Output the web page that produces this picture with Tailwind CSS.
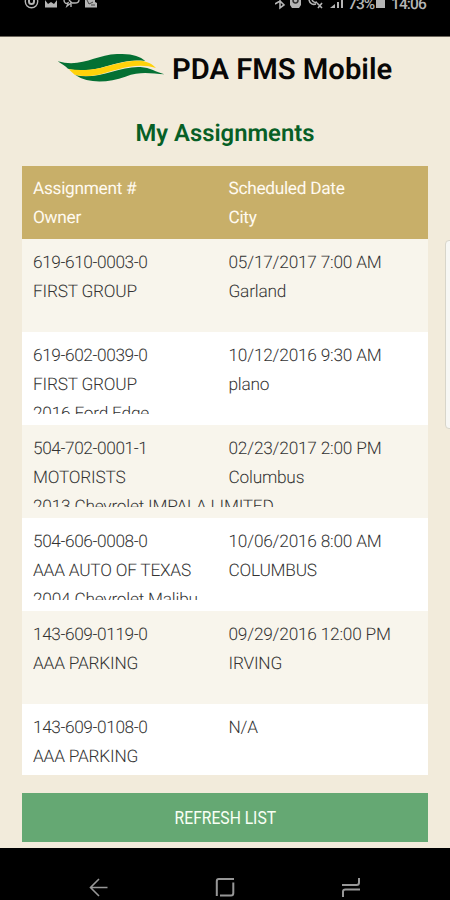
<!DOCTYPE html>
<html lang="en">
<head>
<meta charset="utf-8">
<title>PDA FMS Mobile</title>
<script src="https://cdn.jsdelivr.net/npm/@tailwindcss/browser@4"></script>
</head>
<body class="w-[450px] h-[900px] overflow-hidden bg-[#f2ebdb] font-[Roboto,sans-serif] [text-rendering:geometricPrecision]">
<div class="relative flex h-[900px] w-[450px] flex-col overflow-hidden">
  <header class="flex h-[37px] shrink-0 items-start justify-between overflow-hidden border-b border-[#6b655b] bg-black pl-[24px] pr-[25px] text-[#b5b5b5]">
    <svg class="h-[10px] w-[76px]" viewBox="0 0 76 10" fill="none" stroke="currentColor" stroke-width="1.4">
      <circle cx="7.500" cy="1.500" r="6.200"/><path d="M5 0v1.500a2.500 2.500 0 0 0 5 0V0" stroke-width="2"/>
      <path d="M21 0v7.500h12V0l-3 4-3-2-3 2z" fill="currentColor" stroke="none"/>
      <path d="M40 0c0 3 2 4 4 3l-1 3 4-3h4c3 0 4-1 4-3M45 0l3 3M47 4v3"/>
      <path d="M61 0h10v2l2 1v4.500H61z" fill="currentColor" stroke="none"/><path d="M63 0l2 4 4-2M67 5h4" stroke="#444" stroke-width="1"/>
    </svg>
    <div class="flex items-start">
      <svg class="h-[10px] w-[73px]" viewBox="0 0 73 10" fill="none" stroke="currentColor" stroke-width="1.600">
        <path d="M0 4l5-3 4 4-4 3V0"/>
        <path d="M15 0h11v5l-2 3h-7l-2-3z" fill="currentColor" stroke="none"/><path d="M18 0c0 4 5 4 5 0" stroke="#333"/>
        <path d="M34 0c1 4 4 5 7 4M37 0c1 2 3 3 5 2M42 3l5 5M47 3l-4 5"/>
        <path d="M55 8l5-4v4zM62 8V2h2v6zM66 8V0h2v8z" fill="currentColor" stroke="none"/>
      </svg>
      <span class="-mt-[5px] w-[28px] whitespace-nowrap text-[15.5px] font-medium leading-[18px] tracking-[-0.9px]">73%</span>
      <span class="mr-[6px] block h-[8px] w-[9px] bg-[#b5b5b5]"></span>
      <span class="-mt-[5px] w-[34px] whitespace-nowrap text-[15.5px] font-medium leading-[18px] tracking-[-0.9px]">14:06</span>
    </div>
  </header>

  <main class="flex h-[811px] shrink-0 flex-col px-[22px]">
    <div class="flex h-[65px] items-center pl-[35px] pt-px">
      <svg class="h-[32px] w-[108px] shrink-0" viewBox="15 16 324 96">
        <path d="M17 38C90 58 130 18 195 16C240 15 262 22 280 37C225 31 195 45 145 58C105 67 75 66 48 60C40 53 30 46 17 38Z" fill="#047033"/>
        <path d="M70 79C135 96 200 52 265 55C295 57 312 70 337 77C300 76 270 66 220 84C170 102 110 106 70 79Z" fill="#047033"/>
        <path d="M50 62C150 74 185 34 265 36C288 38 302 47 312 58C250 38 190 66 140 78C110 84 88 82 68 78Z" fill="#ffd20a"/>
      </svg>
      <h1 class="ml-[7px] whitespace-nowrap text-[29.2px] font-semibold leading-[34px] text-[#090807]">PDA FMS Mobile</h1>
    </div>
    <h2 class="h-[64px] pt-[15px] text-center text-[23.8px] font-semibold leading-[32px] text-[#075f26]">My Assignments</h2>

    <section class="h-[609px] w-[406px] shrink-0 overflow-hidden text-[17.3px] font-light leading-[29px] tracking-[-0.22px] text-[#333]">
      <div class="grid h-[73px] grid-cols-[195.5px_1fr] content-start bg-[#c8af69] px-[11px] pt-[9px] font-normal tracking-[-0.3px] text-[#fffaf0]">
        <span>Assignment #</span><span>Scheduled Date</span><span>Owner</span><span>City</span>
      </div>
      <div class="h-[93px] bg-[#f8f5ec] px-[11px] pt-[9.8px]">
        <div class="grid h-[72px] grid-cols-[195.5px_1fr] content-start overflow-hidden">
          <span class="tracking-[-0.42px]">619-610-0003-0</span><span>05/17/2017 7:00 AM</span><span>FIRST GROUP</span><span>Garland</span>
        </div>
      </div>
      <div class="h-[93px] bg-white px-[11px] pt-[9.8px]">
        <div class="grid h-[72px] grid-cols-[195.5px_1fr] content-start overflow-hidden">
          <span class="tracking-[-0.42px]">619-602-0039-0</span><span>10/12/2016 9:30 AM</span><span>FIRST GROUP</span><span>plano</span><span class="col-span-2">2016 Ford Edge</span>
        </div>
      </div>
      <div class="h-[93px] bg-[#f8f5ec] px-[11px] pt-[9.8px]">
        <div class="grid h-[72px] grid-cols-[195.5px_1fr] content-start overflow-hidden">
          <span class="tracking-[-0.42px]">504-702-0001-1</span><span>02/23/2017 2:00 PM</span><span>MOTORISTS</span><span>Columbus</span><span class="col-span-2">2013 Chevrolet IMPALA LIMITED</span>
        </div>
      </div>
      <div class="h-[93px] bg-white px-[11px] pt-[9.8px]">
        <div class="grid h-[72px] grid-cols-[195.5px_1fr] content-start overflow-hidden">
          <span class="tracking-[-0.42px]">504-606-0008-0</span><span>10/06/2016 8:00 AM</span><span>AAA AUTO OF TEXAS</span><span>COLUMBUS</span><span class="col-span-2">2004 Chevrolet Malibu</span>
        </div>
      </div>
      <div class="h-[93px] bg-[#f8f5ec] px-[11px] pt-[9.8px]">
        <div class="grid h-[72px] grid-cols-[195.5px_1fr] content-start overflow-hidden">
          <span class="tracking-[-0.42px]">143-609-0119-0</span><span>09/29/2016 12:00 PM</span><span>AAA PARKING</span><span>IRVING</span>
        </div>
      </div>
      <div class="h-[93px] bg-white px-[11px] pt-[9.8px]">
        <div class="grid h-[72px] grid-cols-[195.5px_1fr] content-start overflow-hidden">
          <span class="tracking-[-0.42px]">143-609-0108-0</span><span>N/A</span><span>AAA PARKING</span>
        </div>
      </div>
    </section>

    <button class="mt-[18px] flex h-[48.5px] w-[406px] shrink-0 items-center justify-center bg-[#65a873] pt-px text-[18px] text-[#f8fff5]"><span class="scale-x-[.87]">REFRESH LIST</span></button>
  </main>

  <nav class="flex h-[52px] shrink-0 items-start bg-black pl-[89px] pt-[28px] text-[#979797]">
    <svg class="h-[22px] w-[20px]" viewBox="0 0 20 22" fill="none" stroke="currentColor" stroke-width="1.6"><path d="M18.500 11.500H2M10 3L1.500 11.500 10 20"/></svg>
    <svg class="ml-[106px] h-[22px] w-[20px]" viewBox="0 0 20 22" fill="none" stroke="currentColor" stroke-width="2"><path d="M1.800 20V5Q1.800 3 3.800 3H19M18.300 6.500V17Q18.300 19.500 16 19.500H5"/></svg>
    <svg class="ml-[106px] h-[22px] w-[20px]" viewBox="0 0 20 22" fill="none" stroke="currentColor" stroke-width="2"><path d="M1 9H15.500Q18 9 18 6.500V2M19 13.500H4.500Q2 13.500 2 15.500V21"/></svg>
  </nav>

  <div class="absolute left-[445px] top-[240px] h-[189px] w-[12px] rounded-[4px] border border-[#d8d5ca] bg-[#f7f7f4]"></div>
</div>
</body>
</html>
